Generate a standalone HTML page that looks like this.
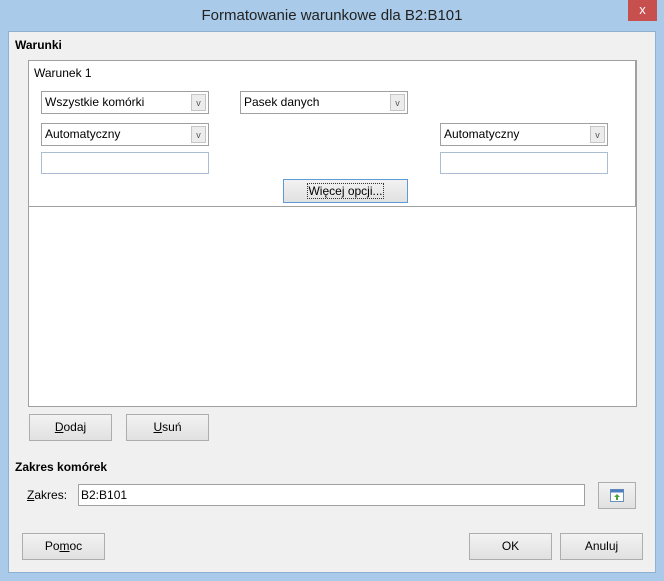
<!DOCTYPE html>
<html><head><meta charset="utf-8"><style>
*{box-sizing:border-box;margin:0;padding:0}
body{width:664px;height:581px;background:#a9cbe9;font-family:"Liberation Sans",sans-serif;font-size:12px;color:#000;position:relative;overflow:hidden}
.a{position:absolute}
.title{left:0;top:0;width:664px;height:31px;text-align:center;line-height:31px;font-size:15px;color:#222}
.close{left:628px;top:0;width:29px;height:21px;background:#c7504f;color:#fff;text-align:center;line-height:20px;font-size:13px}
.body{left:8px;top:31px;width:648px;height:542px;background:#f0f0f0;border:1px solid #8fb1d1}
.b{font-weight:bold}
.sel{background:#fff;border:1px solid #a0a0a0;height:23px;line-height:21px;padding-left:3px}
.sel i{position:absolute;right:2px;top:2px;width:15px;height:17px;border:1px solid #c5c5c5;background:#ececec;font-style:normal;font-size:9px;line-height:16px;text-align:center;color:#555}
.inp{background:#fff;border:1px solid #abbdd3;height:22px}
.btn{background:linear-gradient(#f2f2f2,#e1e1e1);border:1px solid #adadad;text-align:center;line-height:24px}
</style></head><body>
<div class="a title">Formatowanie warunkowe dla B2:B101</div>
<div class="a close">x</div>
<div class="a body"></div>
<div class="a b" style="left:15px;top:38px">Warunki</div>
<div class="a" style="left:28px;top:60px;width:609px;height:347px;background:#fff;border:1px solid #a0a0a0"></div>
<div class="a" style="left:29px;top:61px;width:607px;height:146px;border-bottom:1px solid #a0a0a0;border-right:1px solid #a0a0a0"></div>
<div class="a" style="left:34px;top:66px">Warunek 1</div>
<div class="a sel" style="left:41px;top:91px;width:168px">Wszystkie komórki<i>v</i></div>
<div class="a sel" style="left:240px;top:91px;width:168px">Pasek danych<i>v</i></div>
<div class="a sel" style="left:41px;top:123px;width:168px">Automatyczny<i>v</i></div>
<div class="a sel" style="left:440px;top:123px;width:168px">Automatyczny<i>v</i></div>
<div class="a inp" style="left:41px;top:152px;width:168px"></div>
<div class="a inp" style="left:440px;top:152px;width:168px"></div>
<div class="a btn" style="left:283px;top:179px;width:125px;height:24px;border-color:#5e9ad6;line-height:22px"><span style="outline:1px dotted #333">Więcej opcji...</span></div>
<div class="a btn" style="left:29px;top:414px;width:83px;height:27px"><u>D</u>odaj</div>
<div class="a btn" style="left:126px;top:414px;width:83px;height:27px"><u>U</u>suń</div>
<div class="a b" style="left:15px;top:460px">Zakres komórek</div>
<div class="a" style="left:27px;top:488px"><u>Z</u>akres:</div>
<div class="a inp" style="left:78px;top:484px;width:507px;height:22px;border-color:#a0a0a0;padding-left:2px;line-height:20px">B2:B101</div>
<div class="a btn" style="left:598px;top:482px;width:38px;height:27px"><svg width="14" height="13" style="margin-top:6px" viewBox="0 0 14 13"><rect x="0.5" y="0.5" width="13" height="12" fill="#fff" stroke="#6a8fb8"/><rect x="0.5" y="0.5" width="13" height="3" fill="#4d7fc0"/><path d="M7 5l-3 3h2v3h2V8h2z" fill="#4aa23a"/></svg></div>
<div class="a btn" style="left:22px;top:533px;width:83px;height:27px">Po<u>m</u>oc</div>
<div class="a btn" style="left:469px;top:533px;width:83px;height:27px">OK</div>
<div class="a btn" style="left:560px;top:533px;width:83px;height:27px">Anuluj</div>
</body></html>
